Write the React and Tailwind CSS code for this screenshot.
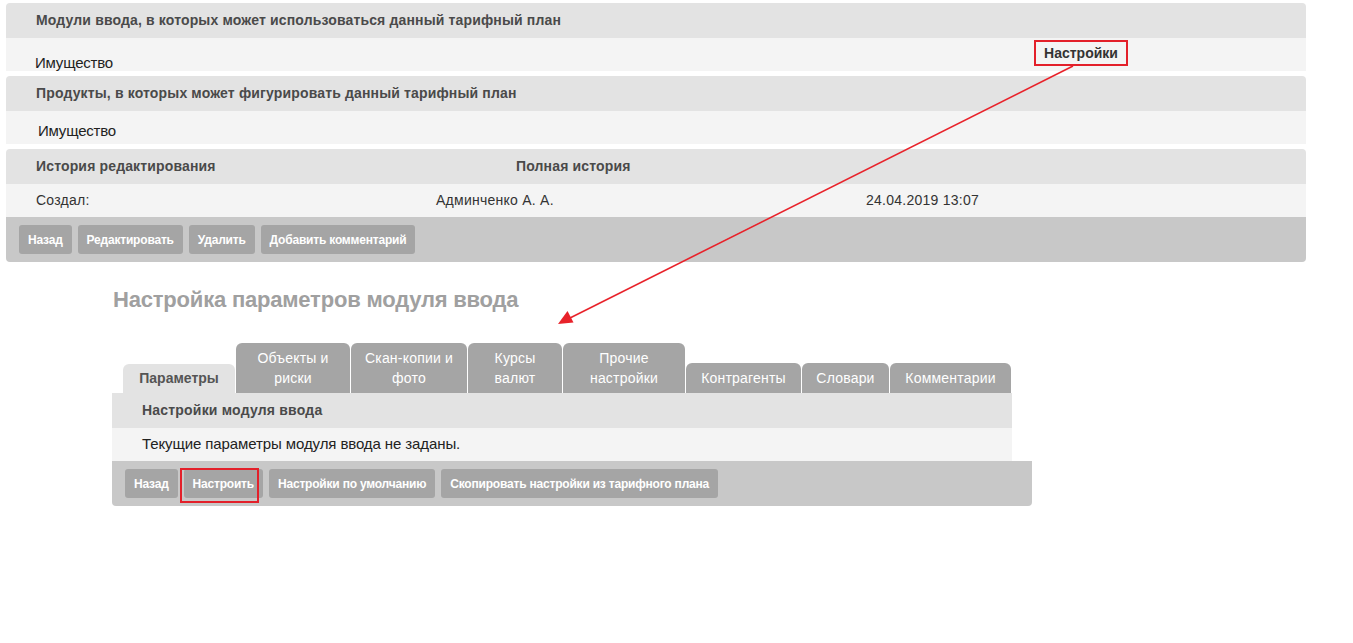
const font = { fontFamily: '"Liberation Sans", Arial, sans-serif' };

function Btn({ children }) {
  return (
    <button className="h-[29px] px-[9px] rounded-[3px] bg-[#a5a5a5] text-white font-bold text-[12px] tracking-[-0.2px]">
      {children}
    </button>
  );
}

function Header({ children }) {
  return (
    <div className="h-[35px] bg-[#e3e3e3] rounded-t-[4px] flex items-center px-[30px] text-[14px] font-bold text-[#4a4a4a] tracking-[0.15px]">
      {children}
    </div>
  );
}

function Tab({ children, tall, active }) {
  if (active) {
    return (
      <div className="h-[29px] w-[112px] ml-[11px] mr-[1px] rounded-t-[6px] bg-[#e3e3e3] flex items-center justify-center text-[14px] font-bold text-[#555]">
        {children}
      </div>
    );
  }
  return (
    <div
      className={
        "mr-[1px] rounded-t-[6px] bg-[#a5a5a5] flex items-center justify-center text-center text-[14px] tracking-[0.2px] leading-[20px] text-white " +
        (tall ? "h-[50px]" : "h-[30px]")
      }
    >
      {children}
    </div>
  );
}

export default function App() {
  return (
    <div className="relative w-[1353px] h-[643px] bg-white text-[#222]" style={font}>
      {/* top card */}
      <div className="ml-[6px] pt-[3px] w-[1300px] flex flex-col gap-[5px]">
        <div>
          <Header>Модули ввода, в которых может использоваться данный тарифный план</Header>
          <div className="h-[33px] bg-[#f4f4f4] flex items-end pl-[29px] text-[15px] leading-[16px] tracking-[-0.2px]">
            Имущество
          </div>
        </div>
        <div>
          <Header>Продукты, в которых может фигурировать данный тарифный план</Header>
          <div className="h-[33px] bg-[#f4f4f4] flex items-center pt-[7px] pl-[32px] text-[15px] tracking-[-0.2px]">
            Имущество
          </div>
        </div>
        <div>
          <div className="h-[35px] bg-[#e3e3e3] rounded-t-[4px] flex items-center text-[14px] font-bold text-[#4a4a4a] tracking-[0.15px]">
            <span className="pl-[30px] w-[510px]">История редактирования</span>
            <span>Полная история</span>
          </div>
          <div className="h-[33px] bg-[#f4f4f4] flex items-center text-[14px] text-[#333] tracking-[0.25px]">
            <span className="pl-[30px] w-[430px]">Создал:</span>
            <span className="w-[430px]">Админченко А. А.</span>
            <span>24.04.2019 13:07</span>
          </div>
          <div className="h-[45px] bg-[#c8c8c8] rounded-b-[4px] flex items-center gap-[6px] px-[13px]">
            <Btn>Назад</Btn>
            <Btn>Редактировать</Btn>
            <Btn>Удалить</Btn>
            <Btn>Добавить комментарий</Btn>
          </div>
        </div>
      </div>

      {/* settings block */}
      <div className="ml-[112px] w-[920px]">
        <h2 className="mt-[25px] ml-[1px] text-[22px] font-bold text-[#a0a0a0] leading-[26px] tracking-[-0.2px]">
          Настройка параметров модуля ввода
        </h2>
        <div className="mt-[30px] flex items-end">
          <Tab active>Параметры</Tab>
          <div className="w-[115px]"><Tab tall>Объекты и<br />риски</Tab></div>
          <div className="w-[117px]"><Tab tall>Скан-копии и<br />фото</Tab></div>
          <div className="w-[95px]"><Tab tall>Курсы<br />валют</Tab></div>
          <div className="w-[123px]"><Tab tall>Прочие<br />настройки</Tab></div>
          <div className="w-[116px]"><Tab>Контрагенты</Tab></div>
          <div className="w-[88px]"><Tab>Словари</Tab></div>
          <div className="w-[122px]"><Tab>Комментарии</Tab></div>
        </div>
        <div className="w-[900px] h-[35px] bg-[#e3e3e3] flex items-center pl-[30px] text-[14px] font-bold text-[#4a4a4a] tracking-[0.2px]">
          Настройки модуля ввода
        </div>
        <div className="w-[900px] h-[33px] bg-[#f4f4f4] flex items-center pl-[30px] text-[15px] tracking-[-0.1px]">
          Текущие параметры модуля ввода не заданы.
        </div>
        <div className="h-[45px] bg-[#c8c8c8] rounded-b-[4px] flex items-center gap-[6px] px-[13px]">
          <Btn>Назад</Btn>
          <div className="relative">
            <Btn>Настроить</Btn>
            <div className="absolute -left-[4px] -top-[1px] w-[79px] h-[35px] border-2 border-[#e3202a]" />
          </div>
          <Btn>Настройки по умолчанию</Btn>
          <Btn>Скопировать настройки из тарифного плана</Btn>
        </div>
      </div>

      {/* annotation */}
      <div className="absolute left-[1034px] top-[40px] w-[94px] h-[26px] border-2 border-[#e3202a] flex items-center justify-center text-[14px] font-bold text-[#333]">
        Настройки
      </div>
      <svg className="absolute left-0 top-0 pointer-events-none" width="1353" height="643">
        <line x1="1073" y1="66" x2="568" y2="319" stroke="#e8222a" strokeWidth="1.6" />
        <polygon points="558,324 573.5,322.5 567.5,311" fill="#e8222a" />
      </svg>
    </div>
  );
}
